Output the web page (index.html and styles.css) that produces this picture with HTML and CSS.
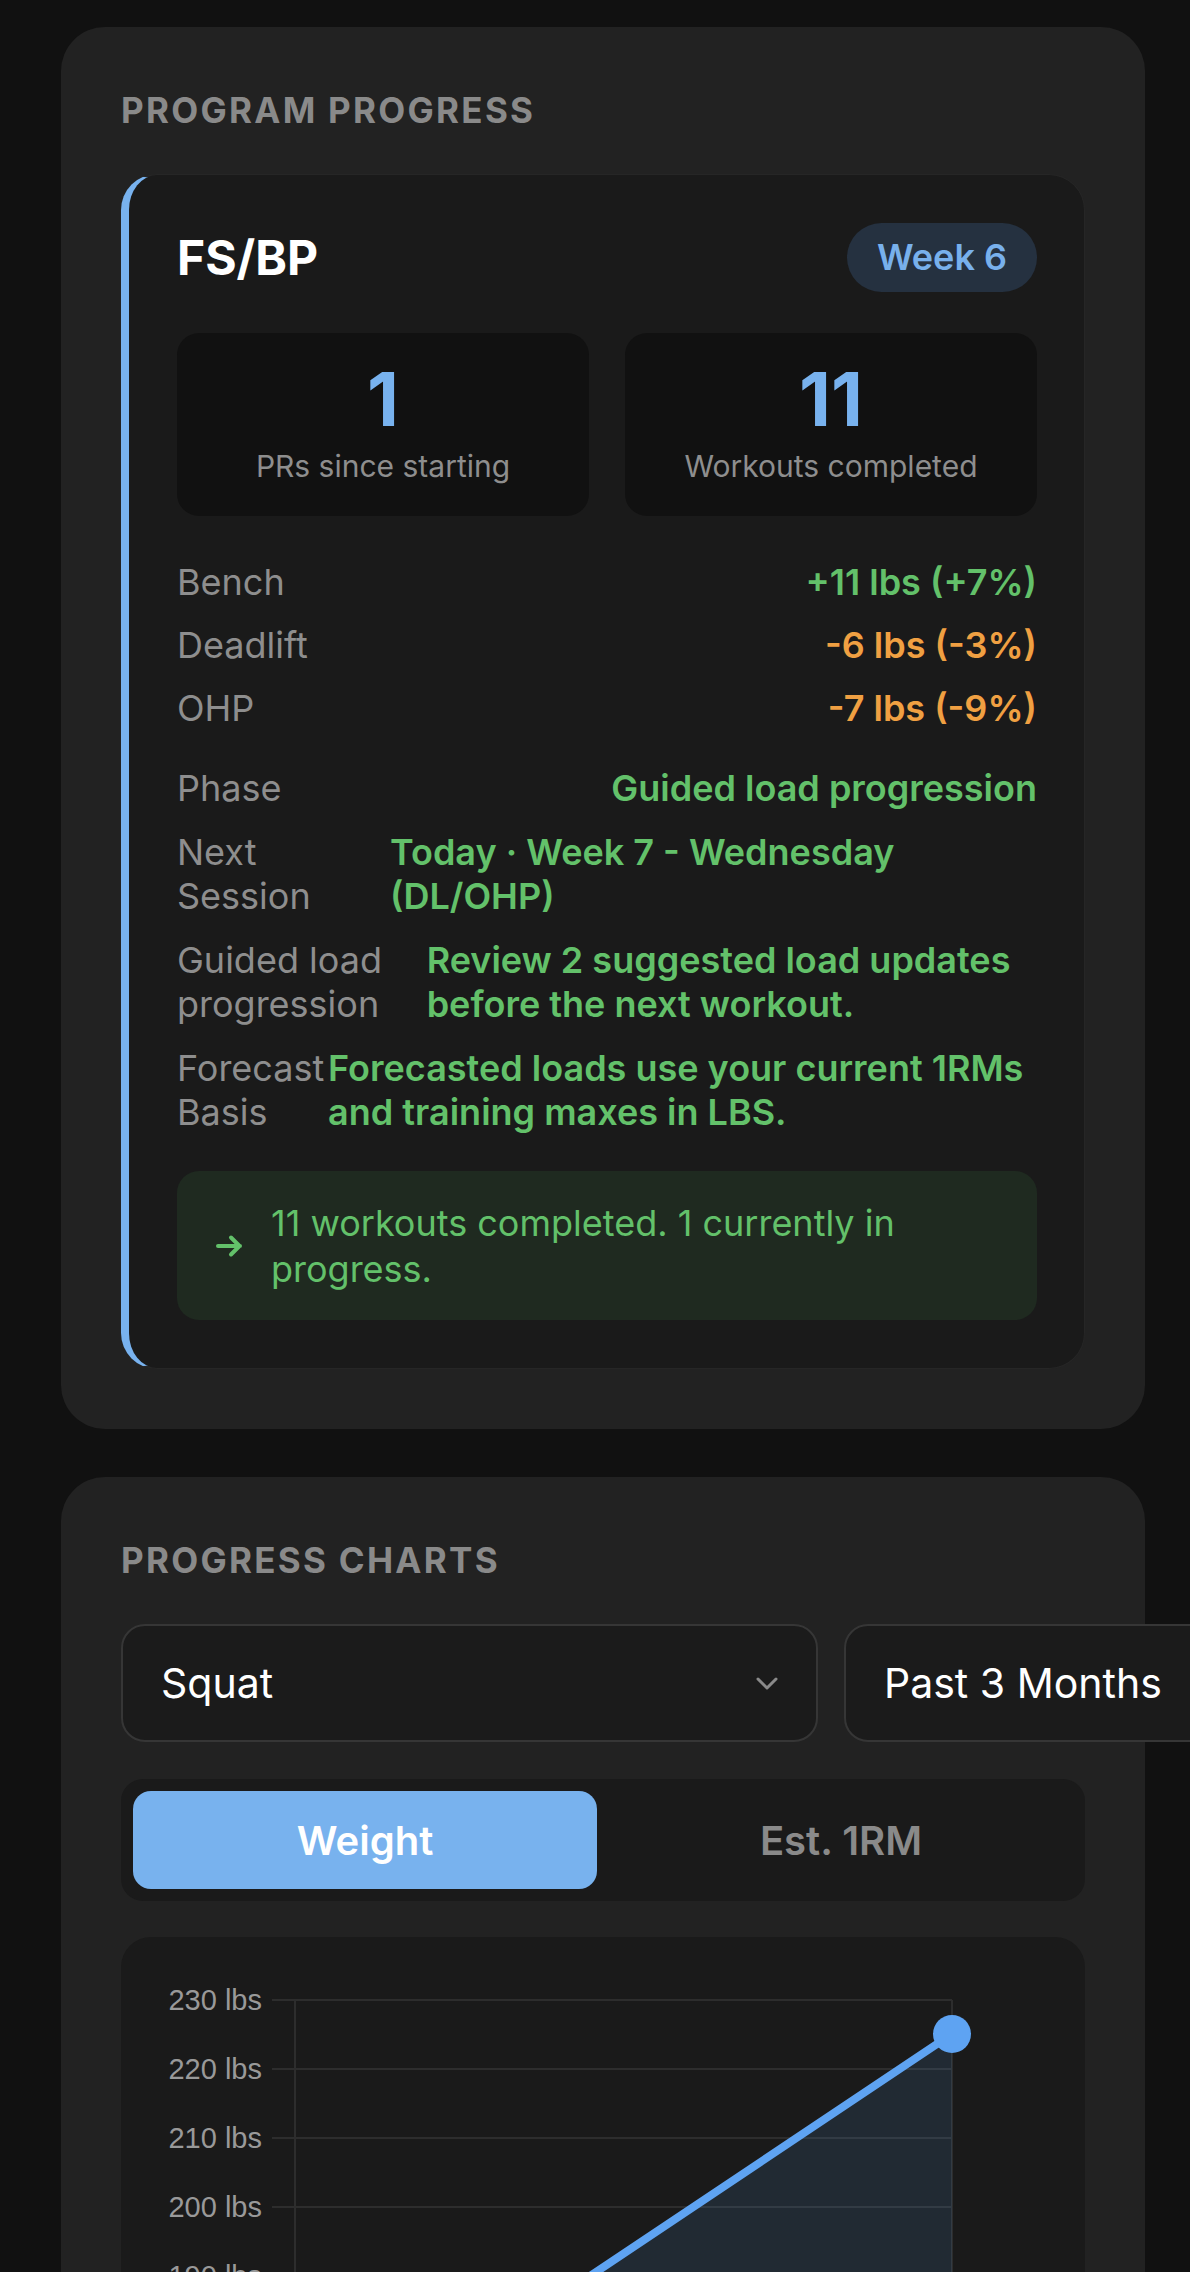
FILE: index.html
```html
<!DOCTYPE html>
<html lang="en">
<head>
    <meta charset="UTF-8">
    <meta name="viewport" content="width=device-width, initial-scale=1.0">
    <title>Progress</title>
    <link rel="stylesheet" href="styles.css">
</head>
<body>
    <div class="page">
        <section class="panel">
            <h2 class="panel-title">Program Progress</h2>
            <div class="program-card">
                <div class="program-head">
                    <h3 class="program-name">FS/BP</h3>
                    <span class="week-pill">Week 6</span>
                </div>
                <div class="summary">
                    <div class="summary-box">
                        <div class="summary-num">1</div>
                        <div class="summary-label">PRs since starting</div>
                    </div>
                    <div class="summary-box">
                        <div class="summary-num">11</div>
                        <div class="summary-label">Workouts completed</div>
                    </div>
                </div>
                <div class="info-list">
                    <div class="info-row"><span class="info-label">Bench</span><span class="info-value up">+11 lbs (+7%)</span></div>
                    <div class="info-row"><span class="info-label">Deadlift</span><span class="info-value down">-6 lbs (-3%)</span></div>
                    <div class="info-row"><span class="info-label">OHP</span><span class="info-value down">-7 lbs (-9%)</span></div>
                </div>
                <div class="info-list details">
                    <div class="info-row"><span class="info-label">Phase</span><span class="info-value up">Guided load progression</span></div>
                    <div class="info-row"><span class="info-label">Next Session</span><span class="info-value up">Today · Week 7 - Wednesday (DL/OHP)</span></div>
                    <div class="info-row"><span class="info-label">Guided load progression</span><span class="info-value up">Review 2 suggested load updates before the next workout.</span></div>
                    <div class="info-row"><span class="info-label">Forecast Basis</span><span class="info-value up">Forecasted loads use your current 1RMs and training maxes in LBS.</span></div>
                </div>
                <div class="status-note">
                    <svg class="status-icon" viewBox="0 0 28 24" width="28" height="24">
                        <path d="M2 12h22M15 3.5l8.5 8.5-8.5 8.5" fill="none" stroke="#63c16a" stroke-width="4" stroke-linecap="round" stroke-linejoin="round"/>
                    </svg>
                    <p>11 workouts completed. 1 currently in progress.</p>
                </div>
            </div>
        </section>

        <section class="panel">
            <h2 class="panel-title">Progress Charts</h2>
            <div class="filter-row">
                <div class="select-box exercise">
                    <span>Squat</span>
                    <svg class="chevron" viewBox="0 0 22 13" width="22" height="13"><path d="M2 2l9 9 9-9" fill="none" stroke="#8a8a8a" stroke-width="3" stroke-linecap="round" stroke-linejoin="round"/></svg>
                </div>
                <div class="select-box range">
                    <span>Past 3 Months</span>
                    <svg class="chevron" viewBox="0 0 22 13" width="22" height="13"><path d="M2 2l9 9 9-9" fill="none" stroke="#8a8a8a" stroke-width="3" stroke-linecap="round" stroke-linejoin="round"/></svg>
                </div>
            </div>
            <div class="toggle">
                <button class="toggle-btn active">Weight</button>
                <button class="toggle-btn">Est. 1RM</button>
            </div>
            <div class="chart-card">
                <svg class="chart" viewBox="0 0 964 520" width="964" height="520">
                    <g class="grid">
                        <line x1="151" y1="63" x2="831" y2="63"/>
                        <line x1="151" y1="132" x2="831" y2="132"/>
                        <line x1="151" y1="201" x2="831" y2="201"/>
                        <line x1="151" y1="270" x2="831" y2="270"/>
                        <line x1="151" y1="339" x2="831" y2="339"/>
                        <line x1="151" y1="408" x2="831" y2="408"/>
                        <line x1="174" y1="63" x2="174" y2="470"/>
                        <line x1="831" y1="63" x2="831" y2="470"/>
                    </g>
                    <g class="ticks">
                        <text x="141" y="63">230 lbs</text>
                        <text x="141" y="132">220 lbs</text>
                        <text x="141" y="201">210 lbs</text>
                        <text x="141" y="270">200 lbs</text>
                        <text x="141" y="339">190 lbs</text>
                        <text x="141" y="408">180 lbs</text>
                    </g>
                    <polygon class="area" points="831,97 330,432 174,470 831,470"/>
                    <polyline class="line" points="174,470 330,432 831,97"/>
                    <circle class="dot" cx="831" cy="97" r="19"/>
                </svg>
            </div>
        </section>
    </div>
</body>
</html>
```

FILE: styles.css
```css
html, body {
    overflow-x: hidden;
}
body {
    margin: 0;
    font-family: Inter, "Noto Sans", sans-serif;
    background-color: #111111;
    color: #ffffff;
}
.page {
    display: flex;
    flex-direction: column;
    gap: 48px;
    padding: 27px 0 0 61px;
}
.panel {
    width: 1084px;
    box-sizing: border-box;
    background-color: #222222;
    border-radius: 44px;
    padding: 63px 60px 60px;
}
.panel-title {
    margin: 0 0 44px;
    font-size: 35px;
    line-height: 40px;
    font-weight: 700;
    letter-spacing: 0.065em;
    text-transform: uppercase;
    color: #8a8a8a;
}

/* Program card */
.program-card {
    background-color: #1a1a1a;
    border: 1px solid #262626;
    border-left: 8px solid #78b2ee;
    border-radius: 36px;
    padding: 48px 47px 48px 48px;
}
.program-head {
    display: flex;
    justify-content: space-between;
    align-items: center;
}
.program-name {
    margin: 0;
    font-size: 48px;
    line-height: 1;
    font-weight: 700;
}
.week-pill {
    background-color: #253140;
    color: #78b0ec;
    font-size: 36px;
    line-height: 41px;
    font-weight: 600;
    padding: 14px 30px;
    border-radius: 40px;
}
.summary {
    display: grid;
    grid-template-columns: 1fr 1fr;
    gap: 36px;
    margin-top: 41px;
}
.summary-box {
    background-color: #111111;
    border-radius: 22px;
    padding: 29px 16px 32px;
    text-align: center;
}
.summary-num {
    font-size: 74px;
    line-height: 74px;
    font-weight: 700;
    color: #78b2ee;
}
.summary-label {
    margin-top: 12px;
    font-size: 30px;
    line-height: 36px;
    color: #8e8e8e;
}
.info-list {
    display: flex;
    flex-direction: column;
    gap: 19px;
    margin-top: 44px;
}
.info-list.details {
    margin-top: 36px;
    gap: 20px;
}
.info-row {
    display: flex;
    justify-content: space-between;
    font-size: 36px;
    line-height: 44px;
}
.info-label {
    color: #8e8e8e;
}
.info-value {
    font-weight: 600;
}
.info-value.up {
    color: #63c16a;
}
.info-value.down {
    color: #f0a042;
}
.status-note {
    display: flex;
    align-items: center;
    gap: 27px;
    margin-top: 37px;
    padding: 29px 39px 28px;
    border-radius: 22px;
    background-color: #1f2a20;
}
.status-icon {
    flex: none;
}
.status-note p {
    margin: 0;
    font-size: 36px;
    line-height: 46px;
    color: #63c16a;
}

/* Charts */
.filter-row {
    display: flex;
    gap: 26px;
}
.select-box {
    display: flex;
    align-items: center;
    justify-content: space-between;
    gap: 40px;
    height: 118px;
    box-sizing: border-box;
    padding: 0 38px;
    border: 2px solid #363636;
    border-radius: 24px;
    background-color: #1b1b1b;
    font-size: 41px;
    white-space: nowrap;
}
.select-box.exercise {
    flex: 0 0 697px;
}
.select-box.range {
    flex: none;
}
.toggle {
    display: grid;
    grid-template-columns: 1fr 1fr;
    gap: 12px;
    margin-top: 37px;
    padding: 12px;
    border-radius: 22px;
    background-color: #1a1a1a;
}
.toggle-btn {
    height: 98px;
    border: none;
    border-radius: 18px;
    background: none;
    font-family: inherit;
    font-size: 40px;
    font-weight: 600;
    color: #8a8a8a;
}
.toggle-btn.active {
    background-color: #78b2ee;
    color: #ffffff;
}
.chart-card {
    margin-top: 36px;
    border-radius: 30px;
    background-color: #1a1a1a;
    overflow: hidden;
}
.chart {
    display: block;
}
.grid line {
    stroke: #2d2d2d;
    stroke-width: 2;
}
.ticks text {
    font-family: "Liberation Sans", Arial, sans-serif;
    font-size: 29px;
    fill: #999999;
    text-anchor: end;
    dominant-baseline: central;
}
.area {
    fill: rgba(94, 163, 242, 0.12);
}
.line {
    fill: none;
    stroke: #5ea3f2;
    stroke-width: 8;
    stroke-linejoin: round;
}
.dot {
    fill: #5ea3f2;
}
```
